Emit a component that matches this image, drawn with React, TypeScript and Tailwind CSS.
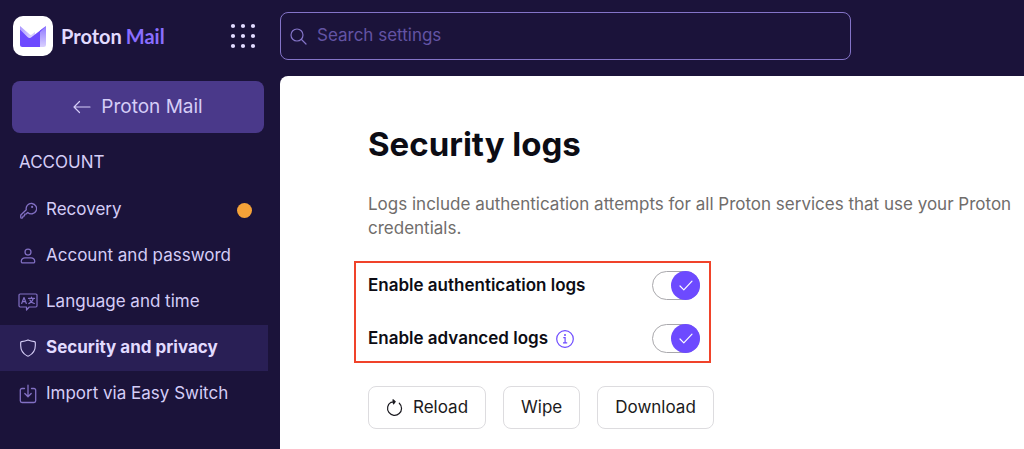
import React, { useState } from 'react';

type IconProps = { className?: string };

const KeyIcon = ({ className }: IconProps) => (
  <svg viewBox="0 0 16 16" width={17} height={17} fill="none" stroke="currentColor" strokeWidth="1.250" strokeLinecap="round" strokeLinejoin="round" className={className}>
    <path d="M7.300 9.800l-1.300 1.300-1.500.4-.3 1.500-1.300.4-.4 1.300a.8.8 0 0 1-.7.500H1.500a.8.8 0 0 1-.8-.8v-1.700c0-.3.1-.6.300-.8L5.900 7.300A4.900 4.900 0 1 1 7.300 9.800z" />
    <circle cx="11.400" cy="4.600" r="1" fill="currentColor" stroke="none" />
  </svg>
);

const UserIcon = ({ className }: IconProps) => (
  <svg viewBox="0 0 16 16" width={16} height={16} fill="none" stroke="currentColor" strokeWidth="1.250" strokeLinejoin="round" className={className}>
    <circle cx="8" cy="4" r="3" />
    <path d="M5 9.800h6a3.700 3.700 0 0 1 3.700 3.200c.2 1-.4 1.900-1.400 1.900H2.700c-1 0-1.600-.9-1.400-1.900A3.700 3.700 0 0 1 5 9.800z" />
  </svg>
);

const LanguageIcon = ({ className }: IconProps) => (
  <svg viewBox="0 0 20 18" width={20} height={18} fill="none" stroke="currentColor" strokeWidth="1.200" strokeLinecap="round" strokeLinejoin="round" className={className}>
    <path d="M2.200 1h15.600A1.200 1.200 0 0 1 19 2.200v10.600a1.200 1.200 0 0 1-1.200 1.200h-6.600L8.500 17v-3H2.200A1.200 1.200 0 0 1 1 12.800V2.200A1.200 1.200 0 0 1 2.200 1z" />
    <path d="M3.700 10.500 6 4.500l2.300 6M4.500 8.600h3M10.500 5.400h6M13.500 4v1.400M15.300 5.400c-.5 2.300-2.200 4.200-4.500 5.200M11.900 7c.8 1.700 2.300 2.900 4.400 3.500" />
  </svg>
);

const ShieldIcon = ({ className }: IconProps) => (
  <svg viewBox="0 0 16 16" width={18} height={18} fill="none" stroke="currentColor" strokeLinejoin="round" className={className}>
    <path d="M8 .8c2 .9 4 1.300 5.700 1.500.5.1.8.500.8.9v2.500c0 4.200-2.300 7.400-5.700 9.300a1.600 1.600 0 0 1-1.600 0C3.800 13.100 1.500 9.900 1.500 5.700V3.200c0-.4.3-.8.8-.9C4 2.100 6 1.700 8 .8z" />
  </svg>
);

const ImportIcon = ({ className }: IconProps) => (
  <svg viewBox="0 0 18 20" width={18} height={20} fill="none" stroke="currentColor" strokeWidth="1.300" strokeLinecap="round" strokeLinejoin="round" className={className}>
    <path d="M5.500 4.500H3A1.700 1.700 0 0 0 1.300 6.200v10.600c0 .9.8 1.700 1.700 1.700h12c.9 0 1.700-.8 1.700-1.700V6.200c0-.9-.8-1.700-1.700-1.700h-2.500M9 1.200v11M5.800 9.500 9 12.700l3.200-3.200" />
  </svg>
);

interface NavItem {
  label: string;
  icon: React.FC<IconProps>;
  active?: boolean;
  notify?: boolean;
}

const navItems: NavItem[] = [
  { label: 'Recovery', icon: KeyIcon, notify: true },
  { label: 'Account and password', icon: UserIcon },
  { label: 'Language and time', icon: LanguageIcon },
  { label: 'Security and privacy', icon: ShieldIcon, active: true },
  { label: 'Import via Easy Switch', icon: ImportIcon },
];

const Logo = () => (
  <a href="#" className="flex items-center gap-2">
    <span className="flex h-10 w-10 items-center justify-center rounded-[10px] bg-white">
      <svg viewBox="0 0 26 21" width={26} height={21}>
        <defs>
          <linearGradient id="flap" x1="0" y1="0" x2="1" y2="1">
            <stop offset="0" stopColor="#a995ff" />
            <stop offset="1" stopColor="#e6dfff" />
          </linearGradient>
          <linearGradient id="side" x1="0" y1="1" x2="0" y2="0">
            <stop offset="0" stopColor="#d9d0ff" />
            <stop offset="1" stopColor="#8e78ff" />
          </linearGradient>
        </defs>
        <path d="M20 4.500 26 0v18.500a2.500 2.500 0 0 1-2.500 2.500H20z" fill="url(#side)" />
        <path d="M0 0l9.500 8.300a2 2 0 0 0 2.700 0l2.800-2.300v4l-6 3.500L0 5z" fill="url(#flap)" />
        <path d="M0 3.500l7.500 7.400a3 3 0 0 0 4.200.1L26 0 20 6V21H2.500A2.500 2.500 0 0 1 0 18.500z" fill="#6d4aff" />
      </svg>
    </span>
    <span className="flex gap-1 font-['Lato',sans-serif] text-xl font-bold text-[#e2dbff]">
      <span>Proton</span>
      <span className="text-[#8a6eff]">Mail</span>
    </span>
  </a>
);

const AppsButton = () => (
  <button type="button" aria-label="Apps" className="text-[#e2dbff]">
    <svg viewBox="0 0 26 26" width={26} height={26} fill="currentColor">
      {[3, 13, 23].map((y) => [3, 13, 23].map((x) => <circle key={`${x}-${y}`} cx={x} cy={y} r="2.100" />))}
    </svg>
  </button>
);

const Sidebar = () => (
  <aside className="flex w-[280px] shrink-0 flex-col">
    <div className="flex h-[72px] items-center justify-between pl-[13px] pr-6">
      <Logo />
      <AppsButton />
    </div>
    <div className="pl-3 pr-4 pt-[9px]">
      <button type="button" className="flex h-[52px] w-full items-center justify-center gap-2.5 rounded-lg bg-[#4a398a] text-[19px] text-[#d5cdf7]">
        <svg viewBox="0 0 18 14" width={18} height={14} fill="none" stroke="currentColor" strokeWidth="1.200" strokeLinecap="round" strokeLinejoin="round">
          <path d="M17 7H1M6.500 1.500 1 7l5.500 5.500" />
        </svg>
        Proton Mail
      </button>
    </div>
    <h2 className="pl-[19px] pt-[17px] text-[17px] leading-6 text-[#d5cdf7]">ACCOUNT</h2>
    <nav className="mr-3 mt-[13px]">
      {navItems.map(({ label, icon: Icon, active, notify }) => (
        <a
          key={label}
          href="#"
          aria-current={active ? 'page' : undefined}
          className={`flex h-[46px] items-center gap-2 pl-[18px] pr-4 text-[17px] ${active ? 'bg-[#291f55] font-bold text-[#e2dbff]' : 'text-[#d5cdf7]'}`}
        >
          <span className="flex w-5 justify-center">
            <Icon className={active ? 'text-[#d5cdf7]' : 'text-[#8270c4]'} />
          </span>
          {label}
          {notify && <span className="ml-auto h-[15px] w-[15px] rounded-full bg-[#f5a238]" />}
        </a>
      ))}
    </nav>
  </aside>
);

const SearchBar = () => (
  <label className="flex h-12 w-full max-w-[571px] items-center gap-2.5 rounded-lg border border-[#8474c8] px-[9px]">
    <svg viewBox="0 0 17 17" width={17} height={17} fill="none" stroke="#8474c8" strokeLinecap="round" strokeWidth="1.200" className="shrink-0">
      <circle cx="7" cy="7" r="6" />
      <path d="M11.500 11.500 16 16" />
    </svg>
    <input
      type="text"
      aria-label="Search settings"
      placeholder="Search settings"
      className="min-w-0 flex-1 bg-transparent text-[17px] text-[#d5cdf7] outline-none placeholder:text-[#6353a4]"
    />
  </label>
);

const Toggle = ({ id }: { id: string }) => {
  const [on, setOn] = useState(true);

  return (
    <span className="grid">
      <input
        id={id}
        type="checkbox"
        role="switch"
        checked={on}
        onChange={() => setOn(!on)}
        className="col-start-1 row-start-1 h-[29px] w-12 cursor-pointer appearance-none rounded-full border border-[#a9a8ac] bg-white"
      />
      <span className={`pointer-events-none z-10 col-start-1 row-start-1 flex h-[29px] w-[29px] items-center justify-center rounded-full ${on ? 'justify-self-end bg-[#6d4aff]' : 'bg-[#a9a8ac]'}`}>
        {on && (
          <svg viewBox="0 0 14 11" width={14} height={11} fill="none" stroke="white" strokeLinecap="round" strokeLinejoin="round" strokeWidth="1.200">
            <path d="m1 6 3.800 3.800L13 1.200" />
          </svg>
        )}
      </span>
    </span>
  );
};

const InfoButton = () => (
  <button type="button" aria-label="More info" className="text-[#6d4aff]">
    <svg viewBox="0 0 18 18" width={18} height={18} fill="none" stroke="currentColor" strokeWidth="1.200">
      <circle cx="9" cy="9" r="8.300" />
      <path d="M7.300 7.600h1.800v5.300M7 12.900h4.200" />
      <circle cx="9" cy="5" r="1" fill="currentColor" stroke="none" />
    </svg>
  </button>
);

const ReloadIcon = () => (
  <svg viewBox="0 0 17 18" width={17} height={18} fill="none" stroke="currentColor" strokeLinecap="round" strokeLinejoin="round" strokeWidth="1.200">
    <path d="M13.300 4.200A7 7 0 1 1 5 3.300L7.800 2.800" />
    <path d="M7 .8 9.200 2.600 7.500 4.800z" fill="currentColor" />
  </svg>
);

const ActionButton = ({ children }: { children: React.ReactNode }) => (
  <button type="button" className="flex h-[43px] items-center gap-2.5 rounded-lg border border-[#dddcdf] px-[17px] text-[17px] text-[#1b1a20]">
    {children}
  </button>
);

export default function App() {
  return (
    <div className="flex min-h-screen bg-[#1b133a] font-['Inter',sans-serif]">
      <Sidebar />
      <div className="flex min-w-0 flex-1 flex-col">
        <header className="flex h-[76px] items-start pr-4 pt-3">
          <SearchBar />
        </header>
        <main className="flex-1 rounded-tl-lg bg-white pb-5 pl-[88px] pr-2 pt-12 text-[#0c0c14]">
          <h1 className="text-[33px] font-bold leading-10">Security logs</h1>
          <p className="mt-7 text-[17px] leading-6 text-[#706d6b]">
            Logs include authentication attempts for all Proton services that use your Proton credentials.
          </p>
          <div className="-ml-3.5 mt-[21px] flex w-[357px] max-w-full flex-col gap-6 border-2 border-[#f0432a] py-2 pl-3 pr-[9px] text-[17px] font-semibold">
            <div className="flex items-center justify-between">
              <label htmlFor="auth-logs">Enable authentication logs</label>
              <Toggle id="auth-logs" />
            </div>
            <div className="flex items-center justify-between">
              <div className="flex items-center gap-2">
                <label htmlFor="advanced-logs">Enable advanced logs</label>
                <InfoButton />
              </div>
              <Toggle id="advanced-logs" />
            </div>
          </div>
          <div className="mt-[23px] flex flex-wrap gap-[17px]">
            <ActionButton>
              <ReloadIcon />
              Reload
            </ActionButton>
            <ActionButton>Wipe</ActionButton>
            <ActionButton>Download</ActionButton>
          </div>
        </main>
      </div>
    </div>
  );
}
